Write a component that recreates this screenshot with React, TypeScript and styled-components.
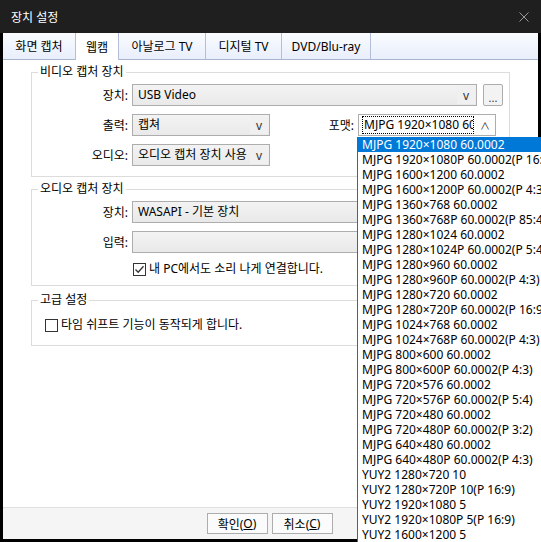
import React, { FC } from "react";
import styled, { createGlobalStyle } from "styled-components";

const GlobalStyle = createGlobalStyle`
  html, body {
    margin: 0;
    padding: 0;
    overflow: hidden;
    background: #000;
  }
  #root {
    width: 541px;
    height: 542px;
  }
`;

const FONT = `"Noto Sans", "Noto Sans CJK KR", sans-serif`;

const tabs = [
  { label: "화면 캡처", width: 73 },
  { label: "웹캠", width: 44, active: true },
  { label: "아날로그 TV", width: 87 },
  { label: "디지털 TV", width: 76 },
  { label: "DVD/Blu-ray", width: 89 },
];

const formats = [
  "MJPG 1920×1080 60.0002",
  "MJPG 1920×1080P 60.0002(P 16:9)",
  "MJPG 1600×1200 60.0002",
  "MJPG 1600×1200P 60.0002(P 4:3)",
  "MJPG 1360×768 60.0002",
  "MJPG 1360×768P 60.0002(P 85:48)",
  "MJPG 1280×1024 60.0002",
  "MJPG 1280×1024P 60.0002(P 5:4)",
  "MJPG 1280×960 60.0002",
  "MJPG 1280×960P 60.0002(P 4:3)",
  "MJPG 1280×720 60.0002",
  "MJPG 1280×720P 60.0002(P 16:9)",
  "MJPG 1024×768 60.0002",
  "MJPG 1024×768P 60.0002(P 4:3)",
  "MJPG 800×600 60.0002",
  "MJPG 800×600P 60.0002(P 4:3)",
  "MJPG 720×576 60.0002",
  "MJPG 720×576P 60.0002(P 5:4)",
  "MJPG 720×480 60.0002",
  "MJPG 720×480P 60.0002(P 3:2)",
  "MJPG 640×480 60.0002",
  "MJPG 640×480P 60.0002(P 4:3)",
  "YUY2 1280×720 10",
  "YUY2 1280×720P 10(P 16:9)",
  "YUY2 1920×1080 5",
  "YUY2 1920×1080P 5(P 16:9)",
  "YUY2 1600×1200 5",
];

const Check: FC<{ checked?: boolean }> = ({ checked }) => (
  <CheckBox>
    {checked && (
      <svg width="11" height="11" viewBox="0 0 11 11">
        <path d="M1.5 5.5 L4.2 8.3 L9.5 2.2" fill="none" stroke="#333" strokeWidth="1.3" />
      </svg>
    )}
  </CheckBox>
);

const App: FC = () => {
  return (
    <>
      <GlobalStyle />
      <Window>
        <TitleBar>
          <span>장치 설정</span>
          <svg width="10" height="10" viewBox="0 0 10 10">
            <path d="M0.5 0.5 L9.5 9.5 M9.5 0.5 L0.5 9.5" stroke="#9a9a9a" strokeWidth="1" />
          </svg>
        </TitleBar>
        <Body>
          <TabStrip>
            {tabs.map((t) => (
              <Tab key={t.label} $width={t.width} $active={t.active}>
                {t.label}
              </Tab>
            ))}
          </TabStrip>

          <Content>
            <Group $top={4}>
              <Legend>비디오 캡처 장치</Legend>
              <Row>
                <Label>장치:</Label>
                <Combo $width={345}>
                  <ComboText>USB Video</ComboText>
                  <Arrow>v</Arrow>
                </Combo>
                <SmallButton>...</SmallButton>
              </Row>
              <Row>
                <Label>출력:</Label>
                <Combo $width={138}>
                  <ComboText>캡쳐</ComboText>
                  <Arrow>v</Arrow>
                </Combo>
                <Label $width={84}>포맷:</Label>
                <ComboAnchor>
                  <Combo $width={138} $open>
                    <FocusText>MJPG 1920×1080 60.0002</FocusText>
                    <Arrow $small>∧</Arrow>
                  </Combo>
                  <DropList>
                    {formats.map((f, i) => (
                      <DropItem key={f} $selected={i === 0}>
                        {f}
                      </DropItem>
                    ))}
                  </DropList>
                </ComboAnchor>
              </Row>
              <Row>
                <Label>오디오:</Label>
                <Combo $width={138}>
                  <ComboText>오디오 캡처 장치 사용 안 함</ComboText>
                  <Arrow>v</Arrow>
                </Combo>
              </Row>
            </Group>

            <Group $top={4} $bottom={8}>
              <Legend>오디오 캡처 장치</Legend>
              <Row>
                <Label>장치:</Label>
                <Combo $width={345}>
                  <ComboText>WASAPI - 기본 장치</ComboText>
                  <Arrow>v</Arrow>
                </Combo>
              </Row>
              <Row>
                <Label>입력:</Label>
                <Combo $width={345}>
                  <ComboText />
                  <Arrow>v</Arrow>
                </Combo>
              </Row>
              <CheckRow $indent={101}>
                <Check checked />
                <span>내 PC에서도 소리 나게 연결합니다.</span>
              </CheckRow>
            </Group>

            <Group $top={6} $bottom={12}>
              <Legend>고급 설정</Legend>
              <CheckRow $indent={13} $top={5}>
                <Check />
                <span>타임 쉬프트 기능이 동작되게 합니다.</span>
              </CheckRow>
            </Group>
          </Content>

          <Footer>
            <DialogButton>
              확인(<u>O</u>)
            </DialogButton>
            <DialogButton>
              취소(<u>C</u>)
            </DialogButton>
          </Footer>
        </Body>
      </Window>
    </>
  );
};

export default App;

const Window = styled.div`
  width: 541px;
  height: 542px;
  display: flex;
  flex-direction: column;
  background: #000;
  font-family: ${FONT};
  font-size: 12px;
  color: #000;
  overflow: hidden;
`;

const TitleBar = styled.div`
  height: 33px;
  flex: none;
  display: flex;
  align-items: center;
  justify-content: space-between;
  padding: 0 12px 0 11px;
  background: #1f1f1f;
  color: #fff;
  font-size: 12px;
`;

const Body = styled.div`
  flex: 1;
  margin: 0 3px 3px;
  display: flex;
  flex-direction: column;
  background: #fff;
  min-height: 0;
`;

const TabStrip = styled.div`
  height: 26px;
  flex: none;
  display: flex;
  background: linear-gradient(#fafcff, #e8eefb);
  border-bottom: 1px solid #a9b4cf;
`;

const Tab = styled.div<{ $width: number; $active?: boolean }>`
  width: ${(p) => p.$width}px;
  box-sizing: border-box;
  display: flex;
  align-items: center;
  justify-content: center;
  border-right: 1px solid #b4bed8;
  border-left: ${(p) => (p.$active ? "1px solid #b4bed8" : "none")};
  margin-left: ${(p) => (p.$active ? "-1px" : "0")};
  background: ${(p) => (p.$active ? "#fff" : "transparent")};
  height: ${(p) => (p.$active ? "27px" : "26px")};
  padding-top: ${(p) => (p.$active ? "1px" : "0")};
  position: relative;
  z-index: ${(p) => (p.$active ? 1 : 0)};
`;

const Content = styled.div`
  flex: 1;
  padding: 0 28px;
  min-height: 0;
`;

const Group = styled.fieldset<{ $top: number; $bottom?: number }>`
  margin: ${(p) => p.$top}px 0 0;
  padding: 4px 6px ${(p) => p.$bottom ?? 10}px 0;
  border: 1px solid #dcdcdc;
  min-width: 0;
  display: flex;
  flex-direction: column;
  gap: 8px;
`;

const Legend = styled.legend`
  padding: 0 2px;
  margin-left: 6px;
  line-height: 16px;
`;

const Row = styled.div`
  display: flex;
  align-items: center;
  height: 22px;
`;

const Label = styled.div<{ $width?: number }>`
  width: ${(p) => p.$width ?? 96}px;
  flex: none;
  text-align: right;
  padding-right: 4px;
`;

const Combo = styled.div<{ $width: number; $open?: boolean }>`
  width: ${(p) => p.$width}px;
  height: 22px;
  box-sizing: border-box;
  flex: none;
  display: flex;
  align-items: center;
  border: 1px solid #adadad;
  background: ${(p) => (p.$open ? "#fdfdfd" : "linear-gradient(#f3f3f3, #e9e9e9)")};
  padding: 0 1px 0 4px;
  overflow: hidden;
`;

const ComboText = styled.div`
  flex: 1;
  min-width: 0;
  white-space: nowrap;
  overflow: hidden;
  padding-left: 1px;
  line-height: 16px;
`;

const FocusText = styled(ComboText)`
  outline: 1px dotted #000;
  outline-offset: 0;
  margin-right: 3px;
  height: 16px;
`;

const Arrow = styled.div<{ $small?: boolean }>`
  width: 18px;
  height: 18px;
  flex: none;
  display: flex;
  align-items: center;
  justify-content: center;
  color: #333;
  font-size: ${(p) => (p.$small ? "10px" : "12px")};
  background: ${(p) => (p.$small ? "transparent" : "#f0f0f0")};
`;

const SmallButton = styled.div`
  width: 20px;
  height: 22px;
  box-sizing: border-box;
  margin-left: 6px;
  border: 1px solid #adadad;
  border-radius: 2px;
  background: #f3f3f3;
  display: flex;
  align-items: flex-end;
  justify-content: center;
  font-size: 11px;
  line-height: 14px;
  color: #333;
`;

const ComboAnchor = styled.div`
  position: relative;
`;

const DropList = styled.div`
  position: absolute;
  top: 23px;
  left: -1px;
  width: 200px;
  z-index: 5;
  background: #fff;
  border: 1px solid #0078d7;
  border-top: none;
`;

const DropItem = styled.div<{ $selected?: boolean }>`
  height: 15px;
  line-height: 15px;
  padding-left: 4px;
  white-space: nowrap;
  background: ${(p) => (p.$selected ? "#0078d7" : "transparent")};
  color: ${(p) => (p.$selected ? "#fff" : "#000")};
`;

const CheckRow = styled.div<{ $indent: number; $top?: number }>`
  display: flex;
  align-items: center;
  gap: 3px;
  padding-left: ${(p) => p.$indent}px;
  margin-top: ${(p) => p.$top ?? 0}px;
  line-height: 16px;
`;

const CheckBox = styled.span`
  width: 13px;
  height: 13px;
  box-sizing: border-box;
  border: 1px solid #333;
  background: #fff;
  display: inline-flex;
  align-items: center;
  justify-content: center;
  flex: none;
`;

const Footer = styled.div`
  height: 26px;
  flex: none;
  border-top: 1px solid #dfdfdf;
  background: #f5f5f5;
  display: flex;
  justify-content: center;
  align-items: flex-start;
  gap: 6px;
  padding-top: 5px;
`;

const DialogButton = styled.div`
  width: 61px;
  height: 21px;
  box-sizing: border-box;
  border: 1px solid #adadad;
  background: #fbfbfb;
  display: flex;
  align-items: center;
  justify-content: center;
  margin-left: -2px;
`;
